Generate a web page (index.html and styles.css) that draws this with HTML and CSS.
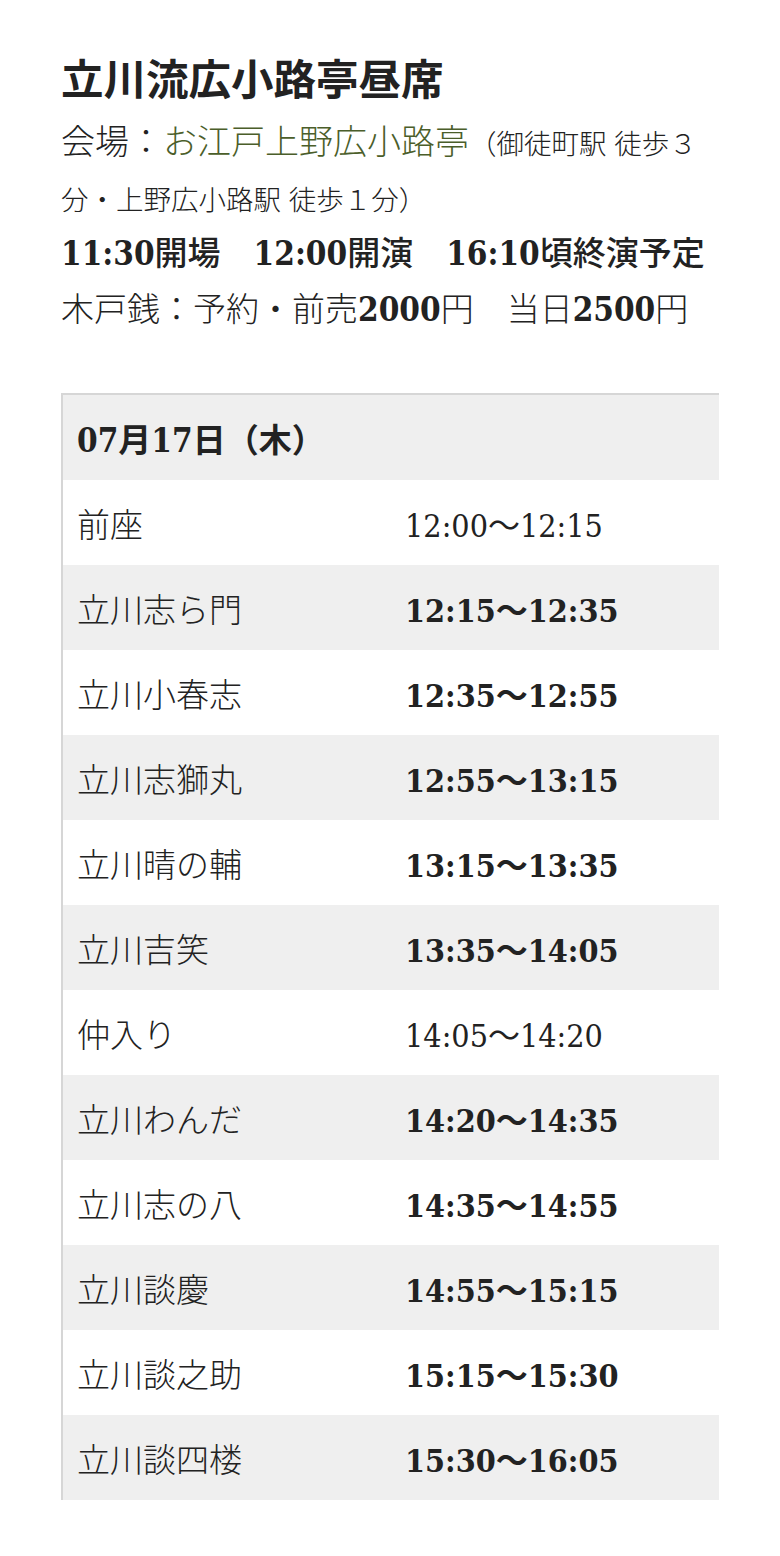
FILE: index.html
```html
<!DOCTYPE html>
<html lang="ja">
<head>
<meta charset="utf-8">
<title>立川流広小路亭昼席</title>
<link rel="stylesheet" href="styles.css">
</head>
<body>
<main class="page">
  <h1 class="title">立川流広小路亭昼席</h1>
  <div class="info">
    <p class="venue">会場：<span class="place">お江戸上野広小路亭</span><span class="access">（御徒町駅 徒歩３分・上野広小路駅 徒歩１分）</span></p>
    <p class="times"><span class="num">11:30</span>開場　<span class="num">12:00</span>開演　<span class="num">16:10</span>頃終演予定</p>
    <p class="price">木戸銭：予約・前売<span class="num">2000</span>円　当日<span class="num">2500</span>円</p>
  </div>
  <table class="program">
    <thead>
      <tr class="head"><th colspan="2">07月17日（木）</th></tr>
    </thead>
    <tbody>
      <tr><td class="name">前座</td><td class="time">12:00〜12:15</td></tr>
      <tr><td class="name">立川志ら門</td><td class="time strong">12:15〜12:35</td></tr>
      <tr><td class="name">立川小春志</td><td class="time strong">12:35〜12:55</td></tr>
      <tr><td class="name">立川志獅丸</td><td class="time strong">12:55〜13:15</td></tr>
      <tr><td class="name">立川晴の輔</td><td class="time strong">13:15〜13:35</td></tr>
      <tr><td class="name">立川吉笑</td><td class="time strong">13:35〜14:05</td></tr>
      <tr><td class="name">仲入り</td><td class="time">14:05〜14:20</td></tr>
      <tr><td class="name">立川わんだ</td><td class="time strong">14:20〜14:35</td></tr>
      <tr><td class="name">立川志の八</td><td class="time strong">14:35〜14:55</td></tr>
      <tr><td class="name">立川談慶</td><td class="time strong">14:55〜15:15</td></tr>
      <tr><td class="name">立川談之助</td><td class="time strong">15:15〜15:30</td></tr>
      <tr><td class="name">立川談四楼</td><td class="time strong">15:30〜16:05</td></tr>
    </tbody>
  </table>
</main>
</body>
</html>
```

FILE: styles.css
```css
html, body {
  margin: 0;
  padding: 0;
  background: #ffffff;
}
body {
  font-family: "DejaVu Serif Condensed", "Noto Sans CJK JP", serif;
  color: #222222;
}
.page {
  width: 658px;
  padding: 46px 0 40px 61px;
}
.title {
  margin: 0;
  font-size: 42.5px;
  line-height: 68px;
  font-weight: 700;
}
.info p {
  margin: 0;
  font-size: 33px;
  line-height: 56px;
  font-weight: 300;
}
.info .venue {
  font-size: 34px;
}
.venue .place {
  color: #4b5e2a;
}
.venue .access {
  font-size: 27.5px;
  line-height: 40px;
}
.info .times {
  font-weight: 500;
}
.info .num {
  font-weight: 700;
}
.program {
  margin-top: 55px;
  width: 658px;
  border-collapse: collapse;
  border-top: 2px solid #d6d6d6;
  border-left: 2px solid #d6d6d6;
}
.program th,
.program td {
  height: 85px;
  padding: 0 0 0 14px;
  font-size: 32px;
  text-align: left;
  vertical-align: middle;
}
.program th {
  font-weight: 700;
  font-size: 33px;
}
.program .name {
  width: 314px;
  font-size: 33px;
  font-weight: 300;
}
.program .time {
  font-weight: 400;
}
.program .time.strong {
  font-weight: 700;
}
.program .head,
.program tbody tr:nth-child(even) {
  background: #efefef;
}
```
